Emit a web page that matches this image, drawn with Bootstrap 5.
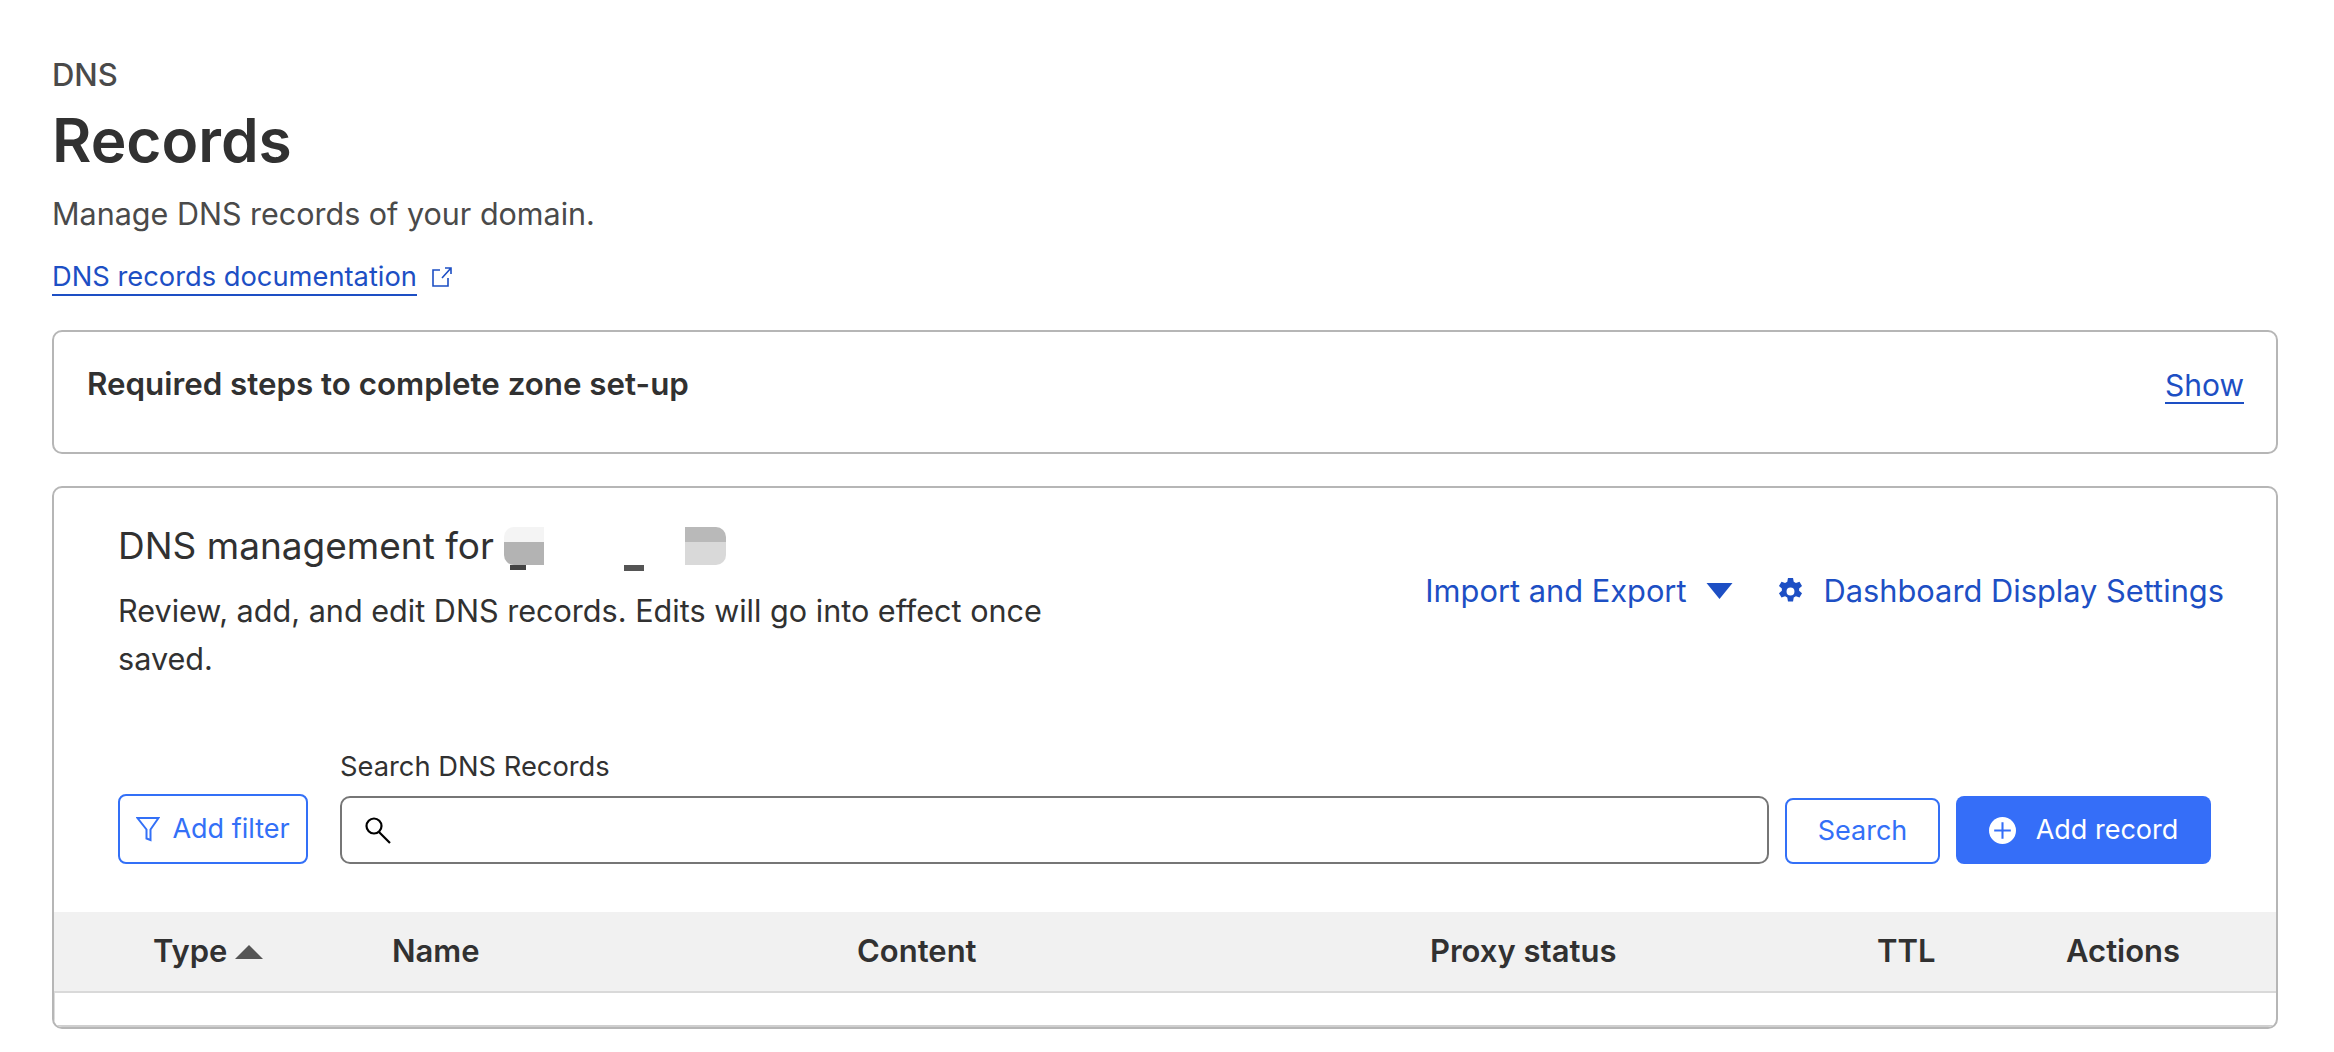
<!DOCTYPE html>
<html lang="en">

<head>
    <meta charset="UTF-8" />
    <meta name="viewport" content="width=device-width, initial-scale=1.0" />
    <title>DNS Records</title>
    <link href="https://cdn.jsdelivr.net/npm/bootstrap@5.3.3/dist/css/bootstrap.min.css" rel="stylesheet">
    <style>
        body {
            background: #fff;
            font-family: Inter, "Liberation Sans", sans-serif;
            color: #313131;
        }

        .page-wrap {
            padding: 57px 56px 0 52px;
        }

        .crumb {
            font-size: 31px;
            line-height: 36px;
            font-weight: 500;
            color: #4a4a4a;
        }

        .page-title {
            font-size: 60.4px;
            line-height: 72px;
            font-weight: 600;
            color: #313131;
            margin: 11px 0 0;
        }

        .page-desc {
            font-size: 30.5px;
            line-height: 40px;
            color: #4a4a4a;
            margin: 18px 0 0;
        }

        .doc-row {
            margin-top: 26px;
            height: 37px;
            font-size: 27.3px;
        }

        .doc-icon {
            margin: 6px 0 0 6px;
        }

        .cf-link {
            color: #1d4fc4;
            text-decoration: none;
            line-height: 34px;
            border-bottom: 2px solid #1d4fc4;
        }

        .show-link {
            font-size: 30px;
            margin-top: 3px;
        }

        .cf-panel {
            border: 2px solid #b6b6b6;
            border-radius: 10px;
        }

        .steps-panel {
            margin-top: 33px;
            height: 124px;
            padding: 33px 32px 0 33px;
            font-size: 31.3px;
            line-height: 38px;
        }

        .mgmt-panel {
            margin-top: 32px;
            height: 543px;
            overflow: hidden;
        }

        .mgmt-head {
            padding: 35px 52px 0 64px;
            height: 278px;
        }

        .mgmt-title {
            font-size: 37px;
            line-height: 46px;
            font-weight: 400;
            color: #313131;
            margin: 0;
        }

        /* redacted domain name: flat pixelated blocks with two descenders poking out */
        .blurred {
            display: inline-block;
            position: relative;
            width: 222px;
            height: 38px;
            margin-top: -10px;
            vertical-align: -6px;
            border-radius: 10px;
            background:
                linear-gradient(#b9b9b9, #b9b9b9) right top / 41px 15px no-repeat,
                linear-gradient(#d9d9d9, #d9d9d9) right bottom / 41px 23px no-repeat,
                linear-gradient(#b3b3b3, #b3b3b3) left bottom / 40px 23px no-repeat,
                linear-gradient(#f4f4f4, #f4f4f4) left top / 40px 15px no-repeat;
        }

        .blurred::after {
            content: "";
            position: absolute;
            left: 0;
            top: 38px;
            width: 142px;
            height: 6px;
            background:
                linear-gradient(#444, #444) 6px 0 / 16px 5px no-repeat,
                linear-gradient(#555, #555) 120px 0 / 20px 6px no-repeat;
        }

        .mgmt-desc {
            font-size: 30.6px;
            line-height: 48px;
            width: 960px;
            margin: 18px 0 0;
        }

        .head-links {
            font-size: 30.8px;
            color: #1d4fc4;
            padding-top: 45px;
        }

        .caret-icon {
            margin: 15px 45px 0 19px;
        }

        .gear-icon {
            margin: 10px 21px 0 0;
        }

        .tool-row {
            padding: 0 65px 0 64px;
            height: 146px;
        }

        .search-wrap {
            margin-left: 16px;
        }

        .field-label {
            font-size: 27.3px;
            line-height: 34px;
            margin-bottom: 12px;
        }

        .search-box {
            height: 68px;
            border: 2px solid #767676;
            border-radius: 10px;
            padding-left: 22px;
        }

        .btn-line {
            border: 2px solid #3370f7;
            border-radius: 8px;
            color: #3370f7;
            background: #fff;
            font-size: 27px;
            padding: 0;
        }

        .btn-filter {
            width: 190px;
            height: 70px;
            gap: 12px;
        }

        .btn-search {
            width: 155px;
            height: 66px;
        }

        .btn-fill {
            height: 68px;
            width: 255px;
            gap: 20px;
            border: 0;
            border-radius: 8px;
            background: #356ef8;
            color: #fff;
            font-size: 27px;
            padding: 0;
        }

        .grid-head {
            height: 81px;
            background: #f1f1f1;
            border-bottom: 2px solid #d9d9d9;
            font-size: 31px;
            font-weight: 600;
            color: #313131;
        }

        .grid-empty {
            height: 34px;
            border-left: 1px solid #dcdcdc;
            border-bottom: 2px solid #cfcfcf;
        }

        .col-type { margin-left: 99px; width: 239px; }
        .col-name { width: 465px; }
        .col-content { width: 573px; }
        .col-proxy { width: 447px; }
        .col-ttl { width: 189px; }
    </style>
</head>

<body>
    <div class="page-wrap">
        <div class="crumb">DNS</div>
        <h1 class="page-title">Records</h1>
        <p class="page-desc">Manage DNS records of your domain.</p>
        <div class="doc-row d-flex align-items-start gap-2">
            <a class="cf-link" href="#">DNS records documentation</a>
            <svg class="doc-icon" width="22" height="22" viewBox="0 0 22 22" fill="none" stroke="#1d4fc4" stroke-width="1.6">
                <path d="M9 4H2v16h15v-8" />
                <path d="M11 12 20 2M14 2h6v6" />
            </svg>
        </div>

        <div class="cf-panel steps-panel d-flex justify-content-between align-items-start">
            <div class="fw-semibold">Required steps to complete zone set-up</div>
            <a class="cf-link show-link" href="#">Show</a>
        </div>

        <div class="cf-panel mgmt-panel">
            <div class="mgmt-head d-flex justify-content-between">
                <div>
                    <h2 class="mgmt-title">DNS management for <span class="blurred"></span></h2>
                    <p class="mgmt-desc">Review, add, and edit DNS records. Edits will go into effect once saved.</p>
                </div>
                <div class="head-links d-flex align-items-start">
                    <span>Import and Export</span>
                    <svg class="caret-icon" width="27" height="16" viewBox="0 0 26 16" fill="#1d4fc4">
                        <path d="M0 0h26L13 16z" />
                    </svg>
                    <svg class="gear-icon" width="25" height="27" viewBox="1.5 .5 13 15" fill="#1d4fc4">
                        <path fill-rule="evenodd" d="M9.4.5 9.8 2.6l1.2.7 2-.7 1.4 2.4-1.6 1.4v1.2l1.6 1.4-1.4 2.4-2-.7-1.2.7-.4 2.1H6.6l-.4-2.1-1.2-.7-2 .7-1.4-2.4 1.6-1.4V6.4L1.6 5 3 2.6l2 .7 1.2-.7.4-2.1zM8 5.8a2.2 2.2 0 1 0 0 4.4 2.2 2.2 0 0 0 0-4.4z" />
                    </svg>
                    <span>Dashboard Display Settings</span>
                </div>
            </div>

            <div class="tool-row d-flex align-items-end gap-3 pb-5">
                <button class="btn btn-line btn-filter d-flex align-items-center justify-content-center" type="button">
                    <svg width="24" height="26" viewBox="0 0 24 26" fill="none" stroke="#3370f7" stroke-width="2">
                        <path d="M1.5 2h21L14.5 13.5V24l-4-1.5v-9z" />
                    </svg>
                    Add filter
                </button>
                <div class="search-wrap flex-grow-1">
                    <div class="field-label">Search DNS Records</div>
                    <div class="search-box d-flex align-items-center">
                        <svg width="28" height="28" viewBox="0 0 28 28" fill="none" stroke="#000" stroke-width="2.2">
                            <circle cx="10" cy="10" r="7.5" />
                            <path d="M15 16l11 11" />
                        </svg>
                    </div>
                </div>
                <button class="btn btn-line btn-search" type="button">Search</button>
                <button class="btn btn-fill d-flex align-items-center justify-content-center" type="button">
                    <svg width="27" height="27" viewBox="0 0 26 26">
                        <circle cx="13" cy="13" r="13" fill="#fff" />
                        <path d="M13 5v16M5 13h16" stroke="#356ef8" stroke-width="2" />
                    </svg>
                    Add record
                </button>
            </div>

            <div class="grid-head d-flex align-items-center">
                <div class="col-type d-flex align-items-center gap-2">Type
                    <svg width="28" height="14" viewBox="0 0 28 14" fill="#555">
                        <path d="M14 0l14 14H0z" />
                    </svg>
                </div>
                <div class="col-name">Name</div>
                <div class="col-content">Content</div>
                <div class="col-proxy">Proxy status</div>
                <div class="col-ttl">TTL</div>
                <div>Actions</div>
            </div>
            <div class="grid-empty"></div>
        </div>
    </div>

    <script src="https://cdn.jsdelivr.net/npm/bootstrap@5.3.3/dist/js/bootstrap.bundle.min.js"></script>
</body>

</html>
